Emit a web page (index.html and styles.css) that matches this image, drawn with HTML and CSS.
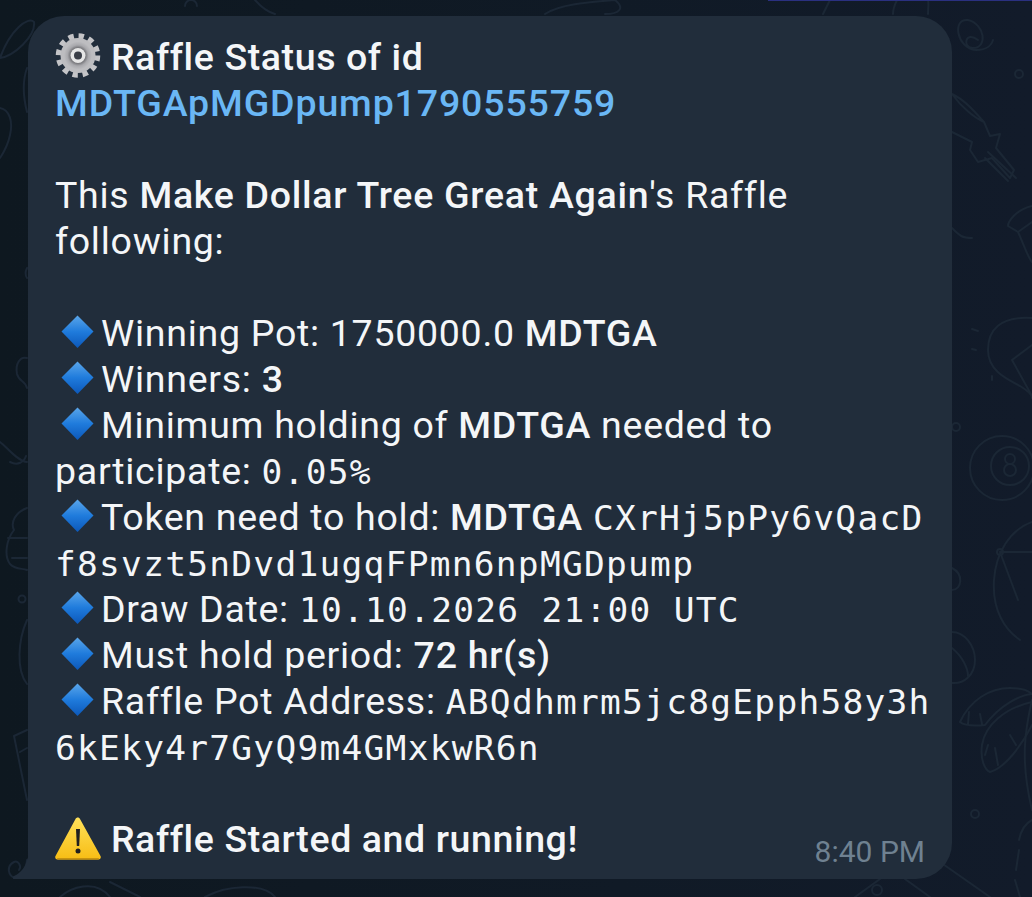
FILE: index.html
```html
<!DOCTYPE html>
<html lang="en">
<head>
<meta charset="utf-8">
<title>Raffle Status</title>
<link rel="stylesheet" href="styles.css">
</head>
<body>
<svg class="doodles" viewBox="0 0 1032 897" aria-hidden="true">
  <g>
    <path d="M0 58C10 30 28 16 34 22C36 36 14 56 0 58"/>
    <path d="M0 108C10 110 13 122 10 135C8 145 4 152 0 158"/>
    <path d="M27 68C22 82 24 100 27 112"/>
    <path d="M27 268C25 272 25 275 27 278"/>
    <path d="M27 358C20 356 15 364 17 374C19 382 25 380 27 388"/>
    <path d="M0 442C6 446 18 462 27 462"/>
    <path d="M10 462C18 466 24 462 26 456"/>
    <path d="M27 508C16 512 10 522 14 530C6 540 4 556 10 564C16 570 22 568 27 570"/>
    <path d="M8 538H27M12 558H27"/>
    <circle cx="22" cy="599" r="3.5"/>
    <path d="M27 620C18 640 16 670 27 684"/>
    <path d="M14 736L27 730M14 736L27 800M20 752L27 748"/>
    <path d="M27 860C26 874 20 876 15 878C8 876 6 866 14 862C18 860 22 866 19 870"/>
    <path d="M60 897C70 888 95 878 110 897M205 897C225 886 262 882 275 897M110 882L140 897"/>
    <path d="M185 6a6 6 0 0 1 12 0M545 14C560 4 590 2 615 0C625 8 620 14 605 14M255 0C262 8 268 12 275 14"/>
    <path d="M823 14L830 0M893 14C893 8 895 4 897 0M928 14C928 8 929 4 928 0"/>
    <path d="M978 40C965 30 962 48 973 48C988 48 985 24 968 20C952 18 956 48 976 50C988 50 992 44 993 40"/>
    <circle cx="1019" cy="74" r="4"/>
    <path d="M952 94C965 100 975 112 984 122C975 118 962 108 952 94M984 122L990 136L1000 134L996 148L1014 170L1010 178L992 158L978 162L970 150L972 142L952 132"/>
    <path d="M988 152L1016 178M985 158L1008 181"/>
    <path d="M952 228C960 236 962 238 972 238"/>
    <path d="M1032 206C1015 210 1008 222 1008 226L1018 232C1022 240 1028 258 1032 262M1018 232L1032 222"/>
    <path d="M1032 318C1000 316 988 330 988 350C988 370 1005 378 1020 386C1030 392 1032 396 1032 398"/>
    <path d="M1012 360L1032 345M1012 360L1032 396"/>
    <path d="M972 329L978 331M972 349L976 350M992 376V380"/>
    <circle cx="956" cy="427" r="4"/>
    <circle cx="1002" cy="468" r="32"/>
    <circle cx="1010" cy="466" r="19"/>
    <circle cx="1010" cy="459" r="5"/>
    <circle cx="1010" cy="470" r="6"/>
    <path d="M1032 522C1010 530 996 552 994 580C992 610 1005 630 1020 640"/>
    <circle cx="1000" cy="552" r="3"/>
    <path d="M1000 552H1032M1000 552L1018 600"/>
    <path d="M952 568C964 574 962 590 952 590"/>
    <path d="M952 632C964 632 975 645 975 660C975 675 964 684 952 683"/>
    <path d="M952 648C962 656 968 668 968 676"/>
    <path d="M960 722C970 700 990 688 1010 688C1020 688 1028 690 1032 694C1020 695 1000 705 985 725C975 726 965 726 960 722M968 724L969 712M982 724L980 714"/>
    <path d="M1032 702C1005 708 985 725 982 745C980 760 985 770 990 772C1005 768 1022 745 1032 725M985 755L988 745M998 765L995 748M1016 745L1010 735"/>
    <path d="M1032 700C1025 730 1020 760 1032 810"/>
    <circle cx="975" cy="814" r="4"/>
    <path d="M1032 820C1022 825 1020 835 1019 840M1019 850L1016 870M1015 880L1020 897"/>
    <path d="M940 862L990 897M880 879L855 897M905 879L930 897"/>
    <circle cx="877" cy="890" r="5"/>
  </g>
</svg>
<div class="top-line"></div>
<main class="message">
  <svg class="tail" viewBox="0 0 16 26" aria-hidden="true"><path d="M16 0V26H1C-1 26 -1 24 1 23C8 20 13 14 16 0Z"/></svg>
  <article class="bubble">
    <p class="line bold"><svg class="emoji" viewBox="0 0 46 46"><use href="#gear"/></svg> Raffle Status of id</p>
    <p class="line link">MDTGApMGDpump1790555759</p>
    <p class="line">&nbsp;</p>
    <p class="line">This <b>Make Dollar Tree Great Again</b>'s Raffle</p>
    <p class="line">following:</p>
    <p class="line">&nbsp;</p>
    <p class="line"><svg class="emoji" viewBox="0 0 46 46"><use href="#diamond"/></svg>Winning Pot: 1750000.0 <b>MDTGA</b></p>
    <p class="line"><svg class="emoji" viewBox="0 0 46 46"><use href="#diamond"/></svg>Winners: <b>3</b></p>
    <p class="line"><svg class="emoji" viewBox="0 0 46 46"><use href="#diamond"/></svg>Minimum holding of <b>MDTGA</b> needed to</p>
    <p class="line">participate: <code>0.05%</code></p>
    <p class="line"><svg class="emoji" viewBox="0 0 46 46"><use href="#diamond"/></svg>Token need to hold: <b>MDTGA</b> <code>CXrHj5pPy6vQacD</code></p>
    <p class="line"><code>f8svzt5nDvd1ugqFPmn6npMGDpump</code></p>
    <p class="line"><svg class="emoji" viewBox="0 0 46 46"><use href="#diamond"/></svg>Draw Date: <code>10.10.2026 21:00 UTC</code></p>
    <p class="line"><svg class="emoji" viewBox="0 0 46 46"><use href="#diamond"/></svg>Must hold period: <b>72 hr(s)</b></p>
    <p class="line"><svg class="emoji" viewBox="0 0 46 46"><use href="#diamond"/></svg>Raffle Pot Address: <code>ABQdhmrm5jc8gEpph58y3h</code></p>
    <p class="line"><code>6kEky4r7GyQ9m4GMxkwR6n</code></p>
    <p class="line">&nbsp;</p>
    <div class="last-row">
      <p class="line bold"><svg class="emoji" viewBox="0 0 46 46"><use href="#warn"/></svg> Raffle Started and running!</p>
      <time class="time">8:40 PM</time>
    </div>
  </article>
</main>
<svg class="defs" aria-hidden="true">
  <defs>
    <linearGradient id="dg" x1="0" y1="0" x2="0" y2="1">
      <stop offset="0" stop-color="#5aa6ea"/>
      <stop offset=".5" stop-color="#1f7bdc"/>
      <stop offset="1" stop-color="#0c58ba"/>
    </linearGradient>
    <linearGradient id="wg" x1="0" y1="0" x2="0" y2="1">
      <stop offset="0" stop-color="#ffe15a"/>
      <stop offset="1" stop-color="#f7bd14"/>
    </linearGradient>
    <radialGradient id="gg" cx=".5" cy=".5" r=".5">
      <stop offset="0" stop-color="#6f6f72"/>
      <stop offset=".55" stop-color="#77777b"/>
      <stop offset=".75" stop-color="#a9a9ad"/>
      <stop offset="1" stop-color="#bdbdc0"/>
    </radialGradient>
    <g id="diamond">
      <path d="M22.500 6.500L38.500 22.500L22.500 39L6.500 22.500Z" fill="url(#dg)"/>
    </g>
    <g id="gear">
      <circle cx="23" cy="22.500" r="19" fill="none" stroke="#c4c4c7" stroke-width="6.500" stroke-dasharray="5.200 4.750"/>
      <circle cx="23" cy="22.500" r="17.500" fill="#bdbdc0"/>
      <circle cx="23" cy="22.500" r="14" fill="url(#gg)"/>
      <circle cx="23" cy="22.500" r="7.500" fill="#e6e6e6"/>
      <circle cx="23" cy="22.500" r="4" fill="#3a3e47"/>
    </g>
    <g id="warn">
      <path d="M22.800 1.500C23.800 1.500 24.500 2 25 3L45.500 40C46.300 41.500 45.500 43.500 43.500 43.500H2.500C.5 43.500-.3 41.500.5 40L20.500 3C21 2 21.800 1.500 22.800 1.500Z" fill="url(#wg)" transform="translate(0 1)"/>
      <path d="M2 43H44L43.500 44.500H2.500Z" fill="#c6920f"/>
      <path d="M21 14H25L24.200 31H21.800Z" fill="#202020"/>
      <circle cx="23" cy="36" r="2.500" fill="#202020"/>
    </g>
  </defs>
</svg>
</body>
</html>
```
FILE: styles.css
```css
html, body {
  margin: 0;
  padding: 0;
}

body {
  position: relative;
  width: 1032px;
  height: 897px;
  overflow: hidden;
  background: linear-gradient(90deg, #0e1820 0%, #101a26 60%, #121b2a 100%);
  font-family: Roboto, "Liberation Sans", sans-serif;
  color: #f4f6f8;
}

.doodles {
  position: absolute;
  inset: 0;
  width: 1032px;
  height: 897px;
  fill: none;
  stroke: #1b2735;
  stroke-width: 2;
  stroke-linecap: round;
  stroke-linejoin: round;
}

.defs {
  position: absolute;
  width: 0;
  height: 0;
}

.top-line {
  position: absolute;
  top: 0;
  right: 0;
  width: 264px;
  height: 1px;
  background: #2a3080;
}

.message {
  position: relative;
  padding: 16px 80px 0 28px;
}

.tail {
  position: absolute;
  left: 13px;
  top: 853px;
  width: 16px;
  height: 26px;
  fill: #212d3b;
}

.bubble {
  width: 870px;
  height: 845px;
  padding: 18px 27px 0;
  background: #212d3b;
  border-radius: 36px 36px 36px 0;
}

.line {
  margin: 0;
  height: 46px;
  font-size: 37.5px;
  letter-spacing: 0.72px;
  line-height: 46px;
  white-space: nowrap;
}

.bold,
b {
  font-weight: 500;
}

.bold {
  letter-spacing: 0.6px;
}

.link {
  color: #6ab7f5;
  font-weight: 500;
  letter-spacing: 0.86px;
}

code {
  font-family: "DejaVu Sans Mono", "Liberation Mono", monospace;
  font-size: 34.5px;
  letter-spacing: 1.27px;
}

.emoji {
  width: 46px;
  height: 46px;
  margin: -8px 0;
  vertical-align: -1px;
}

.last-row {
  display: flex;
  justify-content: space-between;
  align-items: flex-end;
}

.time {
  font-size: 30px;
  letter-spacing: 0;
  line-height: 46px;
  color: #6f8191;
  position: relative;
  top: 13px;
}
```
